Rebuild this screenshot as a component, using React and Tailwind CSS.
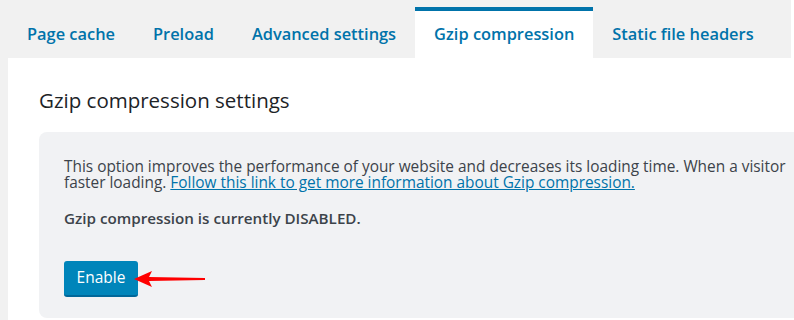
import React from 'react';

const tabs = ['Page cache', 'Preload', 'Advanced settings', 'Gzip compression', 'Static file headers'];
const ACTIVE = 'Gzip compression';

export default function App() {
  return (
    <div className="w-[794px] h-[320px] overflow-hidden bg-white" style={{ fontFamily: '"Open Sans", "Noto Sans", sans-serif' }}>
      <div className="w-[791px] bg-[#f1f1f1] pl-2 pt-[7px] flex">
        {tabs.map((t) =>
          t === ACTIVE ? (
            <div key={t} className="h-[51px] px-[19px] bg-white border-t-4 border-[#0073aa] flex items-center text-[16.4px] font-semibold text-[#0073aa]">
              {t}
            </div>
          ) : (
            <div key={t} className="h-[51px] px-[19px] pt-1 flex items-center text-[16.4px] font-semibold text-[#0073aa]">
              {t}
            </div>
          )
        )}
      </div>

      <div className="flex h-[262px]">
        <div className="w-2 shrink-0 bg-[#f1f1f1]" />
        <div className="flex-1 min-w-0 bg-white pl-[31px] pt-[28px]">
          {/* Heading */}
          <h2 className="text-[20.5px] text-[#1d2327] leading-[28px]">Gzip compression settings</h2>

          {/* Settings box */}
          <div className="mt-[18px] h-[186px] bg-[#f1f2f4] rounded-l-lg pl-[25px] pt-[27px] text-[#3c434a] overflow-hidden">
            <p className="text-[15.4px] leading-[16px] whitespace-nowrap">
              This option improves the performance of your website and decreases its loading time. When a visitor
              <br />
              faster loading.{' '}
              <a href="#" className="text-[#0073aa] underline">Follow this link to get more information about Gzip compression.</a>
            </p>
            <p className="mt-[17px] text-[15.2px] font-semibold leading-[20px]">Gzip compression is currently DISABLED.</p>

            <div className="mt-[33px] flex items-center">
              <button className="w-[74px] h-[36px] rounded-[3px] bg-[#0085ba] border-b-2 border-[#006799] text-white text-[15.5px]">
                Enable
              </button>
              <svg width="76" height="20" viewBox="0 0 76 20" className="-ml-[5px]">
                <path d="M1 10 L19 2 L16 8 L72 9 L72 11 L16 12 L19 18 Z" fill="#ff0000" />
              </svg>
            </div>
          </div>
        </div>
      </div>
    </div>
  );
}
